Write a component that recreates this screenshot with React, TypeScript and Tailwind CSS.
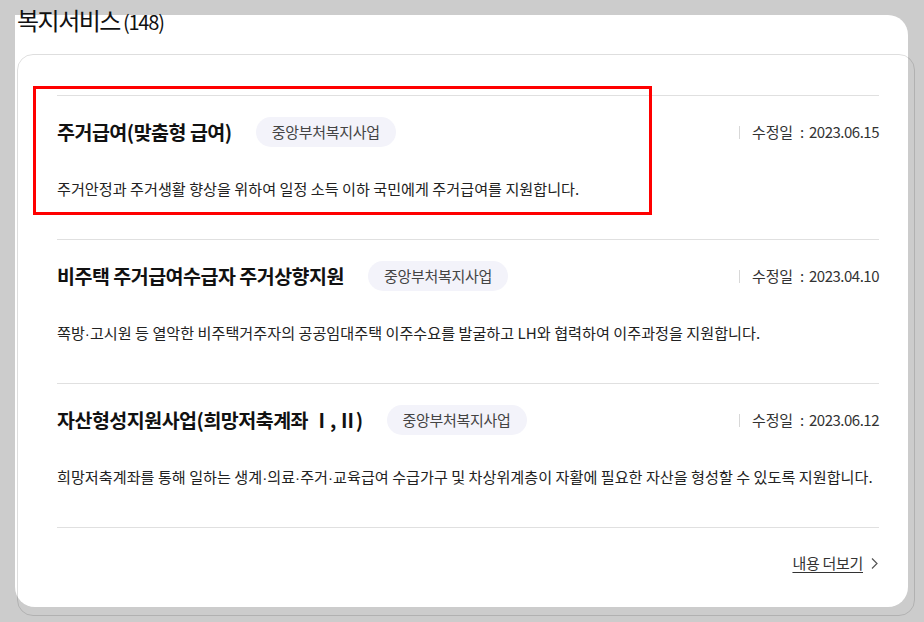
const rows = [
  {
    title: "주거급여(맞춤형 급여)",
    date: "2023.06.15",
    desc: "주거안정과 주거생활 향상을 위하여 일정 소득 이하 국민에게 주거급여를 지원합니다.",
  },
  {
    title: "비주택 주거급여수급자 주거상향지원",
    date: "2023.04.10",
    desc: "쪽방·고시원 등 열악한 비주택거주자의 공공임대주택 이주수요를 발굴하고 LH와 협력하여 이주과정을 지원합니다.",
  },
  {
    title: "자산형성지원사업(희망저축계좌 Ⅰ, Ⅱ)",
    date: "2023.06.12",
    desc: "희망저축계좌를 통해 일하는 생계·의료·주거·교육급여 수급가구 및 차상위계층이 자활에 필요한 자산을 형성할 수 있도록 지원합니다.",
  },
];

// the CJK font draws the middle dot full width; the reference keeps it tight
function Dotted({ text }: { text: string }) {
  const parts = text.split("·");
  return (
    <>
      {parts.map((p, i) => (
        <span key={i}>
          {i > 0 && <span className="font-['Liberation_Sans'] leading-none">·</span>}
          {p}
        </span>
      ))}
    </>
  );
}

// roman numerals come out wide, squeeze them a bit
function Title({ text }: { text: string }) {
  const idx = text.indexOf("Ⅰ");
  if (idx < 0) return <>{text}</>;
  return (
    <>
      {text.slice(0, idx)}
      <span className="tracking-[-1.5px]">{text.slice(idx, -1)}</span>
      {text.slice(-1)}
    </>
  );
}

export default function App() {
  return (
    <div className="w-[924px] h-[622px] overflow-hidden bg-[#cccccc] pt-[15px] pl-[15px] font-['Noto_Sans_CJK_KR',sans-serif]">
      <div className="relative w-[893px] h-[592px] bg-white rounded-[20px] rounded-tl-none">
        {/* outline box sits a little off the white card */}
        <div className="absolute left-[2px] top-[39px] w-[898px] h-[562px] rounded-[16px] border border-black/[0.13] pointer-events-none" />

        {/* heading */}
        <h2 className="absolute left-[2px] top-[-11px] flex items-baseline text-[#111] whitespace-nowrap">
          <span className="text-[24px] leading-[32px] tracking-[-1.5px]">복지서비스</span>
          <span className="ml-[3px] text-[20px] leading-[32px] tracking-[-1.2px]">(148)</span>
        </h2>

        <div className="pl-[42px] pr-[29px] pt-[80px]">
          {rows.map((r) => (
            <div key={r.date} className="border-t border-[#e0e0e0] pt-[21px] pb-[40px]">
              <div className="flex items-center h-[30px]">
                <h3 className="text-[19.5px] leading-[26px] font-bold tracking-[-0.5px] text-[#111] whitespace-nowrap">
                  <Title text={r.title} />
                </h3>
                <span className="ml-[24px] h-[30px] px-[16px] rounded-full bg-[#f3f3fa] text-[15px] leading-[30px] tracking-[-0.3px] text-[#444] whitespace-nowrap">
                  중앙부처복지사업
                </span>
                <div className="ml-auto flex items-center text-[15px] leading-[20px] text-[#333] whitespace-nowrap">
                  <span className="w-px h-[13px] bg-[#d8d8d8] mr-[12px]" />
                  <span className="tracking-[-0.2px]">수정일</span>
                  <span className="ml-[7px] mr-[5px]">:</span>
                  <span className="tracking-[-0.5px]">{r.date}</span>
                </div>
              </div>
              <p className="mt-[30px] h-[22px] text-[15.15px] leading-[22px] text-[#222] whitespace-nowrap">
                <Dotted text={r.desc} />
              </p>
            </div>
          ))}
          <div className="border-t border-[#e0e0e0] pt-[25px] flex justify-end">
            <a className="flex items-center text-[15px] leading-[20px] text-[#333] tracking-[-0.3px]">
              <span className="underline underline-offset-[3px]">내용 더보기</span>
              <svg width="9" height="13" viewBox="0 0 9 13" className="ml-[7px]">
                <polyline points="2,1.5 7,6.5 2,11.5" fill="none" stroke="#555" strokeWidth="1.2" />
              </svg>
            </a>
          </div>
        </div>

        {/* red highlight annotation */}
        <div className="absolute left-[18px] top-[71px] w-[619px] h-[129px] border-[3px] border-[#ff0000] pointer-events-none" />
      </div>
    </div>
  );
}
